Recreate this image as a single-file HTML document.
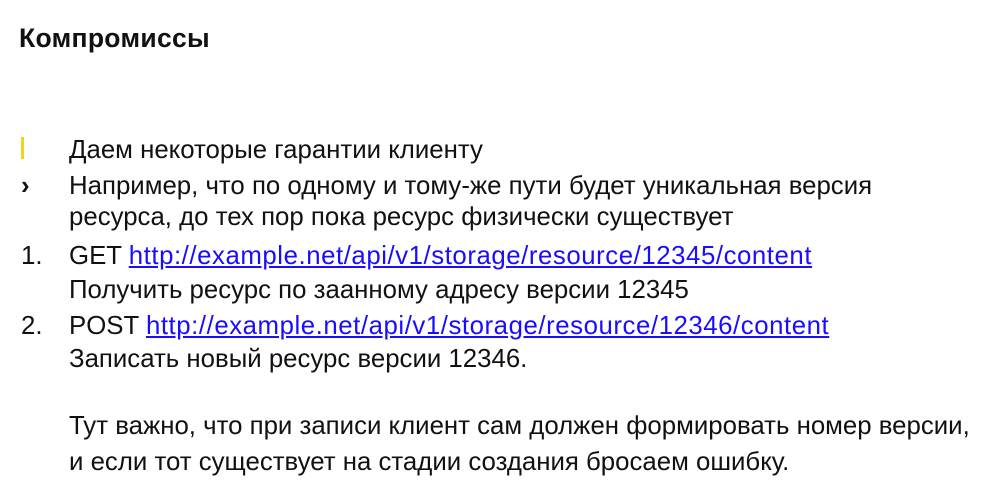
<!DOCTYPE html>
<html><head><meta charset="utf-8"><style>
body{margin:0;width:991px;height:504px;background:#fff;overflow:hidden;position:relative;font-family:"Liberation Sans","DejaVu Sans",sans-serif;color:#111}
.t{position:absolute;left:19px;top:21px;font-size:26.5px;font-weight:bold;line-height:34px;letter-spacing:0.3px}
.l{position:absolute;left:69px;font-size:25.8px;line-height:34px;white-space:nowrap}
.m{position:absolute;font-size:25.8px;line-height:34px}
a{color:#1a0dff;text-decoration:underline;letter-spacing:0.55px}
.bar{position:absolute;left:21px;top:137px;width:3px;height:22px;background:#f2d21a}
</style></head><body>
<div class="t">Компромиссы</div>
<div class="bar"></div>
<div class="l" style="top:133px">Даем некоторые гарантии клиенту</div>
<div class="m" style="left:21px;top:169px;font-weight:bold">›</div>
<div class="l" style="top:169px">Например, что по одному и тому-же пути будет уникальная версия</div>
<div class="l" style="top:200px">ресурса, до тех пор пока ресурс физически существует</div>
<div class="m" style="left:21px;top:239px">1.</div>
<div class="l" style="top:239px">GET <a>http://example.net/api/v1/storage/resource/12345/content</a></div>
<div class="l" style="top:273px">Получить ресурс по заанному адресу версии 12345</div>
<div class="m" style="left:21px;top:309px">2.</div>
<div class="l" style="top:309px">POST <a>http://example.net/api/v1/storage/resource/12346/content</a></div>
<div class="l" style="top:342px">Записать новый ресурс версии 12346.</div>
<div class="l" style="top:409px">Тут важно, что при записи клиент сам должен формировать номер версии,</div>
<div class="l" style="top:445px">и если тот существует на стадии создания бросаем ошибку.</div>
</body></html>
